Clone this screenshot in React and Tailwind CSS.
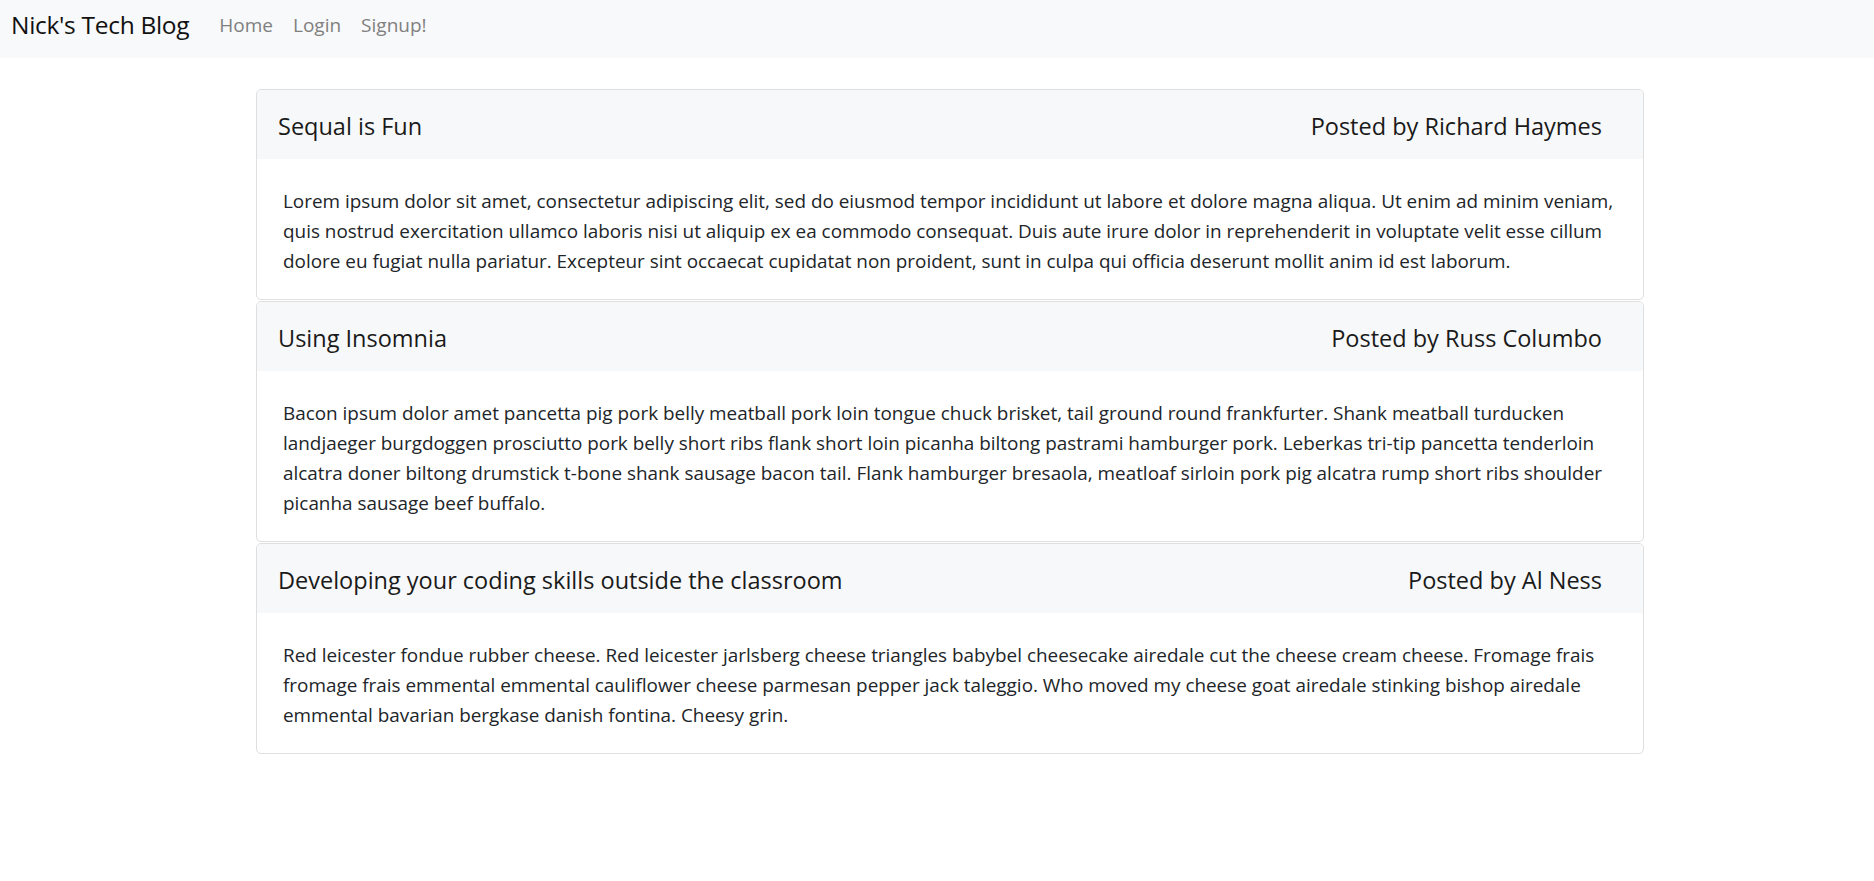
import React from 'react';

const posts = [
  {
    title: 'Sequal is Fun',
    author: 'Richard Haymes',
    lines: [
      'Lorem ipsum dolor sit amet, consectetur adipiscing elit, sed do eiusmod tempor incididunt ut labore et dolore magna aliqua. Ut enim ad minim veniam,',
      'quis nostrud exercitation ullamco laboris nisi ut aliquip ex ea commodo consequat. Duis aute irure dolor in reprehenderit in voluptate velit esse cillum',
      'dolore eu fugiat nulla pariatur. Excepteur sint occaecat cupidatat non proident, sunt in culpa qui officia deserunt mollit anim id est laborum.',
    ],
  },
  {
    title: 'Using Insomnia',
    author: 'Russ Columbo',
    lines: [
      'Bacon ipsum dolor amet pancetta pig pork belly meatball pork loin tongue chuck brisket, tail ground round frankfurter. Shank meatball turducken',
      'landjaeger burgdoggen prosciutto pork belly short ribs flank short loin picanha biltong pastrami hamburger pork. Leberkas tri-tip pancetta tenderloin',
      'alcatra doner biltong drumstick t-bone shank sausage bacon tail. Flank hamburger bresaola, meatloaf sirloin pork pig alcatra rump short ribs shoulder',
      'picanha sausage beef buffalo.',
    ],
  },
  {
    title: 'Developing your coding skills outside the classroom',
    author: 'Al Ness',
    lines: [
      'Red leicester fondue rubber cheese. Red leicester jarlsberg cheese triangles babybel cheesecake airedale cut the cheese cream cheese. Fromage frais',
      'fromage frais emmental emmental cauliflower cheese parmesan pepper jack taleggio. Who moved my cheese goat airedale stinking bishop airedale',
      'emmental bavarian bergkase danish fontina. Cheesy grin.',
    ],
  },
];

const App = () => {
  return (
    <div className="min-h-screen bg-white text-[#212529] font-['Open_Sans',sans-serif]">
      {/* Navbar */}
      <nav className="h-[58px] bg-[#f8f9fa] flex items-center pl-[11px] pb-[8px]">
        <span className="text-[24.5px] tracking-[-0.3px] text-[#111] mr-[30px]">Nick's Tech Blog</span>
        <div className="flex gap-[20px] text-[19px] text-[#808080]">
          <a href="#">Home</a>
          <a href="#">Login</a>
          <a href="#">Signup!</a>
        </div>
      </nav>

      {/* Posts */}
      <div className="ml-[256px] w-[1388px] mt-[31px] flex flex-col gap-[1px]">
        {posts.map((post) => (
          <div key={post.title} className="border border-[#dfdfdf] rounded-[5px] overflow-hidden">
            <div className="h-[69px] bg-[#f7f8f9] flex items-center justify-between pl-[21px] pr-[41px] pt-[5px] text-[23.5px] text-[#1a1a1a]">
              <span>{post.title}</span>
              <span>Posted by {post.author}</span>
            </div>
            <div className="px-[26px] pt-[27px] pb-[23px] text-[18.9px] leading-[30px]">
              {post.lines.map((line, i) => (
                <span key={i} className="block whitespace-nowrap">{line}</span>
              ))}
            </div>
          </div>
        ))}
      </div>
    </div>
  );
};

export default App;
